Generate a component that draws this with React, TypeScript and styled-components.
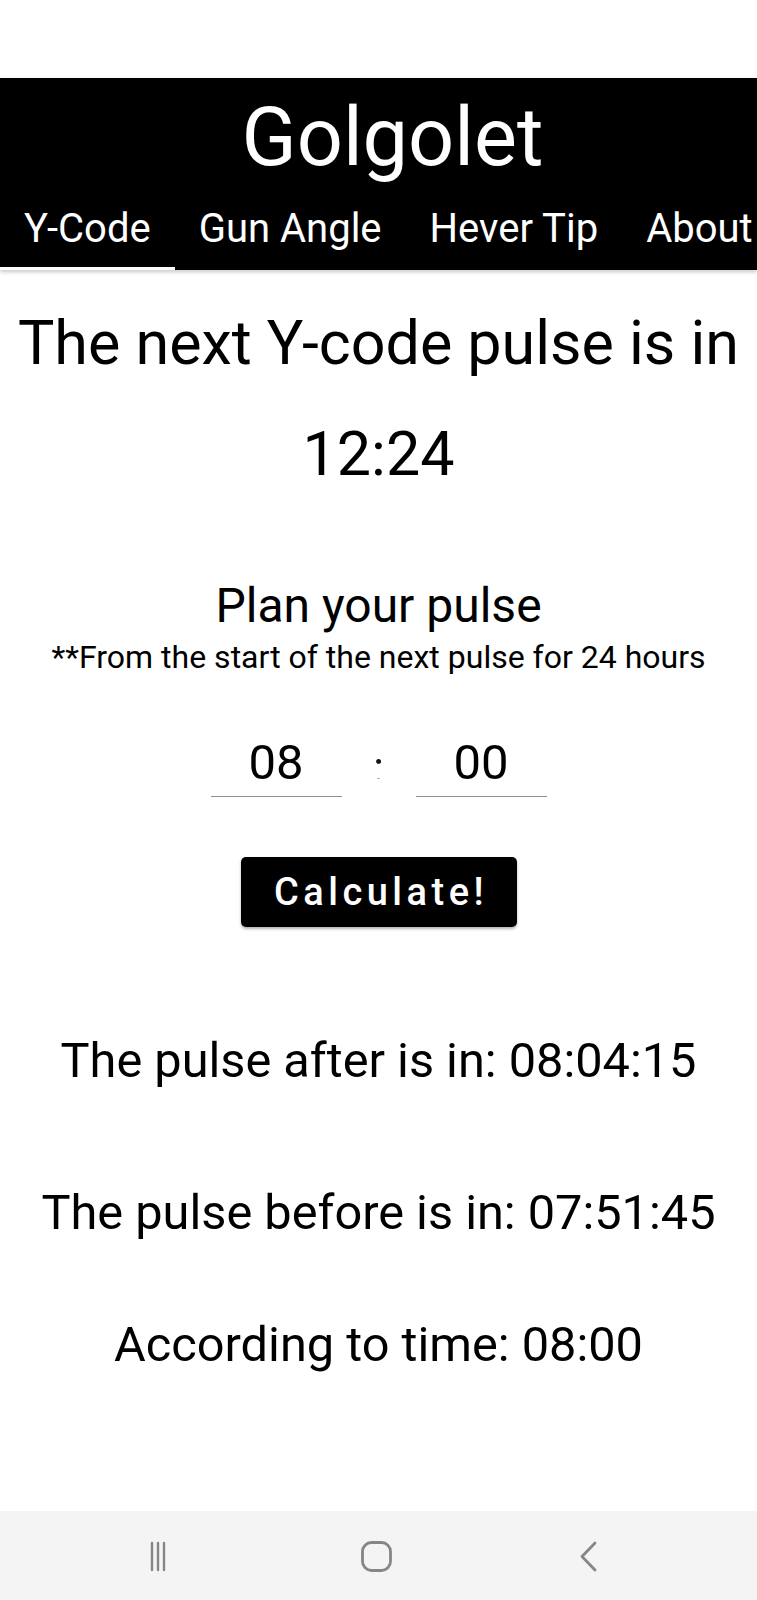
import React from "react";
import styled, { createGlobalStyle } from "styled-components";

const GlobalStyle = createGlobalStyle`
  html, body {
    margin: 0;
    padding: 0;
    background: #ffffff;
  }
  body {
    font-family: Roboto, "Noto Sans", "Liberation Sans", sans-serif;
    color: #000000;
  }
  * { box-sizing: border-box; }
`;

const Screen = styled.div`
  width: 757px;
  height: 1600px;
  display: flex;
  flex-direction: column;
  overflow: hidden;
  background: #ffffff;
`;

const StatusSpace = styled.div`
  height: 78px;
  flex: none;
  background: #ffffff;
`;

const Header = styled.header`
  flex: none;
  background: #000000;
  color: #ffffff;
  padding-top: 13px;
  box-shadow: 0 2px 4px rgba(0, 0, 0, 0.22);
  position: relative;
  z-index: 1;
`;

const AppTitle = styled.h1`
  margin: 0;
  padding-left: 28px;
  font-size: 81px;
  line-height: 94px;
  font-weight: 400;
  text-align: center;
`;

const TabRow = styled.nav`
  display: flex;
  height: 85px;
  overflow: hidden;
  white-space: nowrap;
`;

const Tab = styled.div<{ $active?: boolean }>`
  flex: none;
  height: 85px;
  display: flex;
  align-items: center;
  padding: 5px 24px 0;
  font-size: 40px;
  color: #ffffff;
  border-bottom: 3px solid ${(p) => (p.$active ? "#ffffff" : "transparent")};
`;

const Main = styled.main`
  flex: 1;
  display: flex;
  flex-direction: column;
  align-items: center;
  text-align: center;
`;

const Heading = styled.h2`
  margin: 37px 0 0;
  font-size: 61px;
  line-height: 72px;
  font-weight: 400;
  white-space: nowrap;
`;

const Countdown = styled.div`
  margin-top: 39px;
  font-size: 61px;
  line-height: 72px;
`;

const PlanTitle = styled.h3`
  margin: 88px 0 0;
  font-size: 48px;
  line-height: 56px;
  font-weight: 400;
`;

const Note = styled.p`
  margin: 4px 0 0;
  font-size: 32px;
  line-height: 38px;
  white-space: nowrap;
`;

const TimeRow = styled.div`
  margin-top: 58px;
  display: flex;
  align-items: flex-start;
`;

const TimeInput = styled.input`
  width: 131px;
  height: 63px;
  padding: 0 0 6px;
  border: none;
  border-bottom: 1px solid #8f8f8f;
  outline: none;
  background: transparent;
  font-family: Roboto, "Noto Sans", sans-serif;
  font-size: 49px;
  color: #000000;
  text-align: center;
`;

const ColonSlot = styled.div`
  width: 74px;
  display: flex;
  justify-content: center;
`;

const Colon = styled.span`
  margin-top: 14px;
  font-size: 44px;
  line-height: 40px;
  color: transparent;
  background: linear-gradient(
    to bottom,
    #111111 0,
    #111111 29px,
    #777777 29px,
    #777777 31px,
    transparent 31px
  );
  -webkit-background-clip: text;
  background-clip: text;
`;

const CalcButton = styled.button`
  margin-top: 60px;
  width: 276px;
  height: 70px;
  border: none;
  border-radius: 5px;
  background: #000000;
  color: #ffffff;
  font-family: Roboto, "Noto Sans", sans-serif;
  font-size: 38px;
  font-weight: 500;
  letter-spacing: 4.5px;
  padding: 0 0 0 5px;
  box-shadow: 0 2px 3px rgba(0, 0, 0, 0.3);
  display: flex;
  align-items: center;
  justify-content: center;
`;

const Result = styled.p<{ $gap: number }>`
  margin: ${(p) => p.$gap}px 0 0;
  font-size: 48.7px;
  line-height: 56px;
  white-space: nowrap;
`;

const NavBar = styled.div`
  flex: none;
  height: 89px;
  background: #f4f4f4;
  display: grid;
  grid-template-columns: 218px 218px 206px;
  align-items: center;
  justify-items: center;
  padding: 1px 0 0 49px;
  color: #868686;
`;

const NavSlot = styled.div`
  display: flex;
  align-items: center;
  justify-content: center;
`;

const RecentsIcon = () => (
  <svg width="16" height="31" viewBox="0 0 16 31" fill="none" stroke="currentColor" strokeWidth="2.4" strokeLinecap="round">
    <line x1="2" y1="2" x2="2" y2="29" />
    <line x1="8" y1="2" x2="8" y2="29" />
    <line x1="14" y1="2" x2="14" y2="29" />
  </svg>
);

const HomeIcon = () => (
  <svg width="31" height="31" viewBox="0 0 31 31" fill="none" stroke="currentColor" strokeWidth="2.8">
    <rect x="1.5" y="1.5" width="28" height="28" rx="9" ry="9" />
  </svg>
);

const BackIcon = () => (
  <svg width="17" height="31" viewBox="0 0 17 31" fill="none" stroke="currentColor" strokeWidth="2.8" strokeLinecap="round" strokeLinejoin="round">
    <polyline points="15,2 2,15.5 15,29" />
  </svg>
);

export default function App() {
  return (
    <>
      <GlobalStyle />
      <Screen>
        <StatusSpace />
        <Header>
          <AppTitle>Golgolet</AppTitle>
          <TabRow>
            <Tab $active>Y-Code</Tab>
            <Tab>Gun Angle</Tab>
            <Tab>Hever Tip</Tab>
            <Tab>About</Tab>
          </TabRow>
        </Header>
        <Main>
          <Heading>The next Y-code pulse is in</Heading>
          <Countdown>12:24</Countdown>
          <PlanTitle>Plan your pulse</PlanTitle>
          <Note>**From the start of the next pulse for 24 hours</Note>
          <TimeRow>
            <TimeInput defaultValue="08" aria-label="hours" />
            <ColonSlot>
              <Colon>:</Colon>
            </ColonSlot>
            <TimeInput defaultValue="00" aria-label="minutes" />
          </TimeRow>
          <CalcButton>Calculate!</CalcButton>
          <Result $gap={106}>The pulse after is in: 08:04:15</Result>
          <Result $gap={96}>The pulse before is in: 07:51:45</Result>
          <Result $gap={76}>According to time: 08:00</Result>
        </Main>
        <NavBar>
          <NavSlot><RecentsIcon /></NavSlot>
          <NavSlot><HomeIcon /></NavSlot>
          <NavSlot><BackIcon /></NavSlot>
        </NavBar>
      </Screen>
    </>
  );
}
